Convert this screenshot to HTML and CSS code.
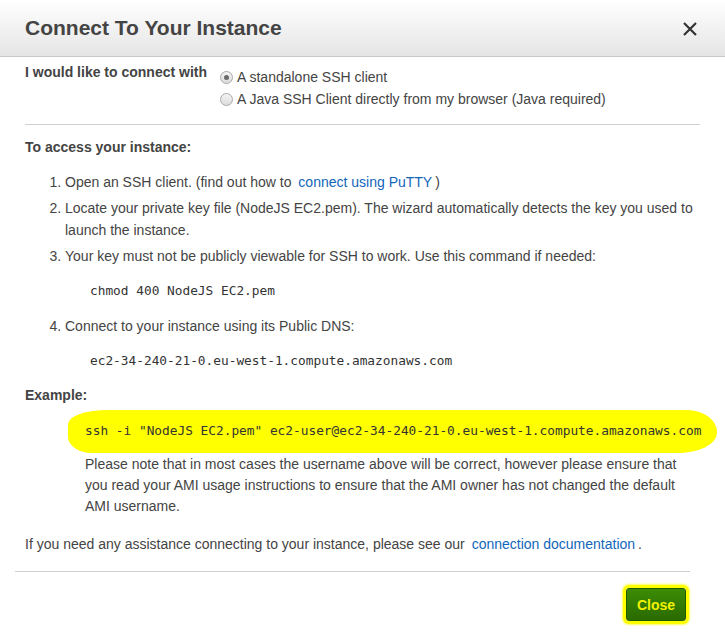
FILE: index.html
```html
<!DOCTYPE html>
<html lang="en">
<head>
<meta charset="utf-8">
<title>Connect To Your Instance</title>
<link rel="stylesheet" href="styles.css">
</head>
<body>
<div class="dialog">
  <div class="header">
    <h1 class="title">Connect To Your Instance</h1>
    <svg class="close-x" width="14" height="14" viewBox="0 0 14 14" aria-label="Close"><path d="M1 1 L13 13 M13 1 L1 13" stroke="#333" stroke-width="2.2" fill="none"/></svg>
  </div>
  <div class="content">
    <div class="connect-row">
      <div class="connect-label">I would like to connect with</div>
      <div class="options">
        <label class="option"><span class="radio checked"></span>A standalone SSH client</label>
        <label class="option"><span class="radio"></span>A Java SSH Client directly from my browser (Java required)</label>
      </div>
    </div>
    <hr class="rule">
    <div class="section-title">To access your instance:</div>
    <ol class="steps">
      <li>Open an SSH client. (find out how to <a class="link" href="#">connect using PuTTY</a>)</li>
      <li>Locate your private key file (NodeJS EC2.pem). The wizard automatically detects the key you used to launch the instance.</li>
      <li>Your key must not be publicly viewable for SSH to work. Use this command if needed:
        <div class="code">chmod 400 NodeJS EC2.pem</div>
      </li>
      <li>Connect to your instance using its Public DNS:
        <div class="code">ec2-34-240-21-0.eu-west-1.compute.amazonaws.com</div>
      </li>
    </ol>
    <div class="section-title">Example:</div>
    <div class="example-code">ssh -i "NodeJS EC2.pem" ec2-user@ec2-34-240-21-0.eu-west-1.compute.amazonaws.com</div>
    <p class="note">Please note that in most cases the username above will be correct, however please ensure that you read your AMI usage instructions to ensure that the AMI owner has not changed the default AMI username.</p>
    <p class="help">If you need any assistance connecting to your instance, please see our <a class="link" href="#">connection documentation</a>.</p>
  </div>
  <div class="footer">
    <button class="close-btn" type="button">Close</button>
  </div>
</div>
</body>
</html>
```
FILE: styles.css
```css
html, body {
  margin: 0;
  padding: 0;
  background: #fff;
}
body {
  font-family: "Liberation Sans", Arial, sans-serif;
  font-size: 14px;
  color: #444;
  width: 725px;
  height: 635px;
  overflow: hidden;
}
.dialog {
  width: 725px;
}
.header {
  border-bottom: 1px solid #c8c8c8;
  background: linear-gradient(#ffffff, #e5e5e5);
  display: flex;
  align-items: center;
  justify-content: space-between;
  padding: 0 28px 0 25px;
  box-sizing: border-box;
  height: 57px;
}
.title {
  margin: 0;
  font-size: 21px;
  font-weight: bold;
  color: #444;
  line-height: 24px;
  padding-bottom: 1px;
}
.close-x {
  display: block;
  margin-top: 1px;
}
.content {
  padding: 0 25px;
  line-height: 22px;
}
.connect-row {
  display: flex;
  margin-top: 4px;
}
.connect-label {
  width: 195px;
  font-weight: bold;
}
.options {
  padding-top: 5px;
  display: flex;
  flex-direction: column;
}
.option {
  display: flex;
  align-items: center;
  height: 22px;
}
.radio {
  width: 11px;
  height: 11px;
  border-radius: 50%;
  border: 1px solid #a9a9a9;
  background: linear-gradient(#f4f4f4, #dcdcdc);
  margin-right: 4px;
  position: relative;
  flex: none;
}
.radio.checked::after {
  content: "";
  position: absolute;
  left: 3px;
  top: 3px;
  width: 5px;
  height: 5px;
  border-radius: 50%;
  background: #6a6a6a;
}
.rule {
  border: 0;
  border-top: 1px solid #cfcfcf;
  margin: 14px 0 0;
}
.section-title {
  font-weight: bold;
  margin-top: 11px;
}
.steps {
  margin: 13px 0 0;
  padding-left: 40px;
}
.steps li {
  margin-bottom: 4px;
}
.steps li:last-child {
  margin-bottom: 0;
}
.code {
  font-family: "DejaVu Sans Mono", "Liberation Mono", monospace;
  font-size: 12.8px;
  color: #333;
  margin: 13px 0 13px 25px;
}
.steps li:last-child .code {
  margin-bottom: 12px;
}
.link {
  color: #1166bb;
  text-decoration: none;
  padding: 0 3px;
}
.example-code {
  font-family: "DejaVu Sans Mono", "Liberation Mono", monospace;
  font-size: 12.8px;
  color: #333;
  background: #ffff00;
  margin: 4px 0 0 43px;
  width: max-content;
  padding: 10px 16px 11px 17px;
  border-radius: 40px 30px 40px 24px / 14px 22px 20px 16px;
  white-space: nowrap;
}
.note {
  margin: 1px 0 0 60px;
  width: 600px;
  line-height: 21px;
}
.help {
  margin: 16px 0 0;
}
.footer {
  margin: 16px 35px 0 15px;
  border-top: 1px solid #cfcfcf;
  display: flex;
  justify-content: flex-end;
  padding: 16px 4px 0 0;
}
.close-btn {
  width: 60px;
  height: 33px;
  border: 1px solid #1f5a00;
  border-radius: 3px;
  background: linear-gradient(#3c8c05, #2a6a00);
  color: #f2f200;
  font-family: "Liberation Sans", Arial, sans-serif;
  font-size: 14px;
  font-weight: bold;
  padding: 0;
  box-shadow: 0 0 0 3px #ffff00, 0 0 2px 4px #ffff60;
}
```
